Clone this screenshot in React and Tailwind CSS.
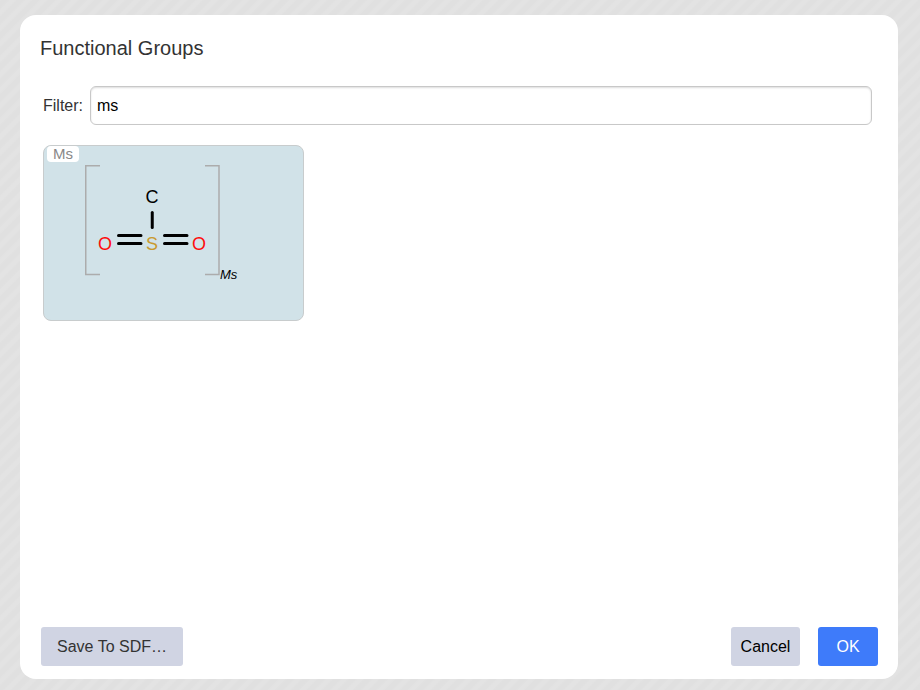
import { useState } from "react";

const groups = [{ name: "Ms" }];

function MesylDrawing() {
  return (
    <svg
      className="block h-[174px] w-[259px] font-['Liberation_Sans',Arial,sans-serif]"
      viewBox="0 0 259 174"
      role="img"
      aria-label="Ms structure"
    >
      <g fill="none" stroke="#acacac" strokeWidth="1.5">
        <path d="M56 19.75H41.75V128.5H56" />
        <path d="M161 19.75H175V128.5H161" />
      </g>
      <g stroke="#000" strokeWidth="3" strokeLinecap="round">
        <path d="M108.25 66.5V81.5" />
        <path d="M74.5 89.5H97M74.5 97.5H97" />
        <path d="M120.5 89.5H143M120.5 97.5H143" />
      </g>
      <g fontSize="18" textAnchor="middle">
        <text x="108" y="57" fill="#000">C</text>
        <text x="61" y="104" fill="#ff0d0d">O</text>
        <text x="108" y="104" fill="#c99a2e">S</text>
        <text x="155" y="104" fill="#ff0d0d">O</text>
      </g>
      <text x="176" y="133" fontSize="13" fontStyle="italic" fill="#000">Ms</text>
    </svg>
  );
}

function GroupCard({ name }) {
  return (
    <button
      type="button"
      aria-pressed="true"
      className="relative rounded-lg border border-[#c8cccd] bg-[#d1e2e8]"
    >
      <MesylDrawing />
      <span className="absolute top-0 left-[3px] rounded bg-white px-1.5 text-[15px] leading-4 text-[#888]">
        {name}
      </span>
    </button>
  );
}

export default function App() {
  const [filter, setFilter] = useState("ms");
  const shown = groups.filter((g) => g.name.toLowerCase().includes(filter.toLowerCase()));

  return (
    <div className="flex min-h-screen bg-[repeating-linear-gradient(-45deg,#e0e0e0_0px,#e0e0e0_4px,#e3e3e3_6px,#e3e3e3_9px,#e0e0e0_11px)] pt-[15px] pr-[22px] pb-[11px] pl-5 font-['Liberation_Sans',Arial,sans-serif] text-base text-[#333]">
      <main
        role="dialog"
        aria-labelledby="dialog-title"
        className="flex flex-1 flex-col rounded-2xl bg-white px-5 pt-5 pb-[13px]"
      >
        <h1 id="dialog-title" className="text-xl leading-[26px]">
          Functional Groups
        </h1>
        <div className="mt-[25px] mr-1.5 ml-[3px] flex items-center gap-[7px]">
          <label htmlFor="filter">Filter:</label>
          <input
            id="filter"
            type="text"
            value={filter}
            onChange={(e) => setFilter(e.target.value)}
            className="h-[39px] min-w-0 flex-1 rounded-md border border-[#c8c8c8] bg-white px-1.5 text-black shadow-[inset_0_1px_2px_#dddddd] outline-none"
          />
        </div>
        <div className="mt-5 ml-[3px] flex flex-1 flex-wrap content-start gap-4">
          {shown.map((g) => (
            <GroupCard key={g.name} name={g.name} />
          ))}
        </div>
        <footer className="ml-px flex items-center gap-[18px]">
          <button type="button" className="mr-auto h-[39px] w-[142px] rounded-[3px] bg-[#d0d4e3]">
            Save To SDF…
          </button>
          <button type="button" className="h-[39px] w-[69px] rounded-[3px] bg-[#d0d4e3] text-black">
            Cancel
          </button>
          <button type="button" className="h-[39px] w-[60px] rounded-[3px] bg-[#3e7bfa] text-white">
            OK
          </button>
        </footer>
      </main>
    </div>
  );
}
